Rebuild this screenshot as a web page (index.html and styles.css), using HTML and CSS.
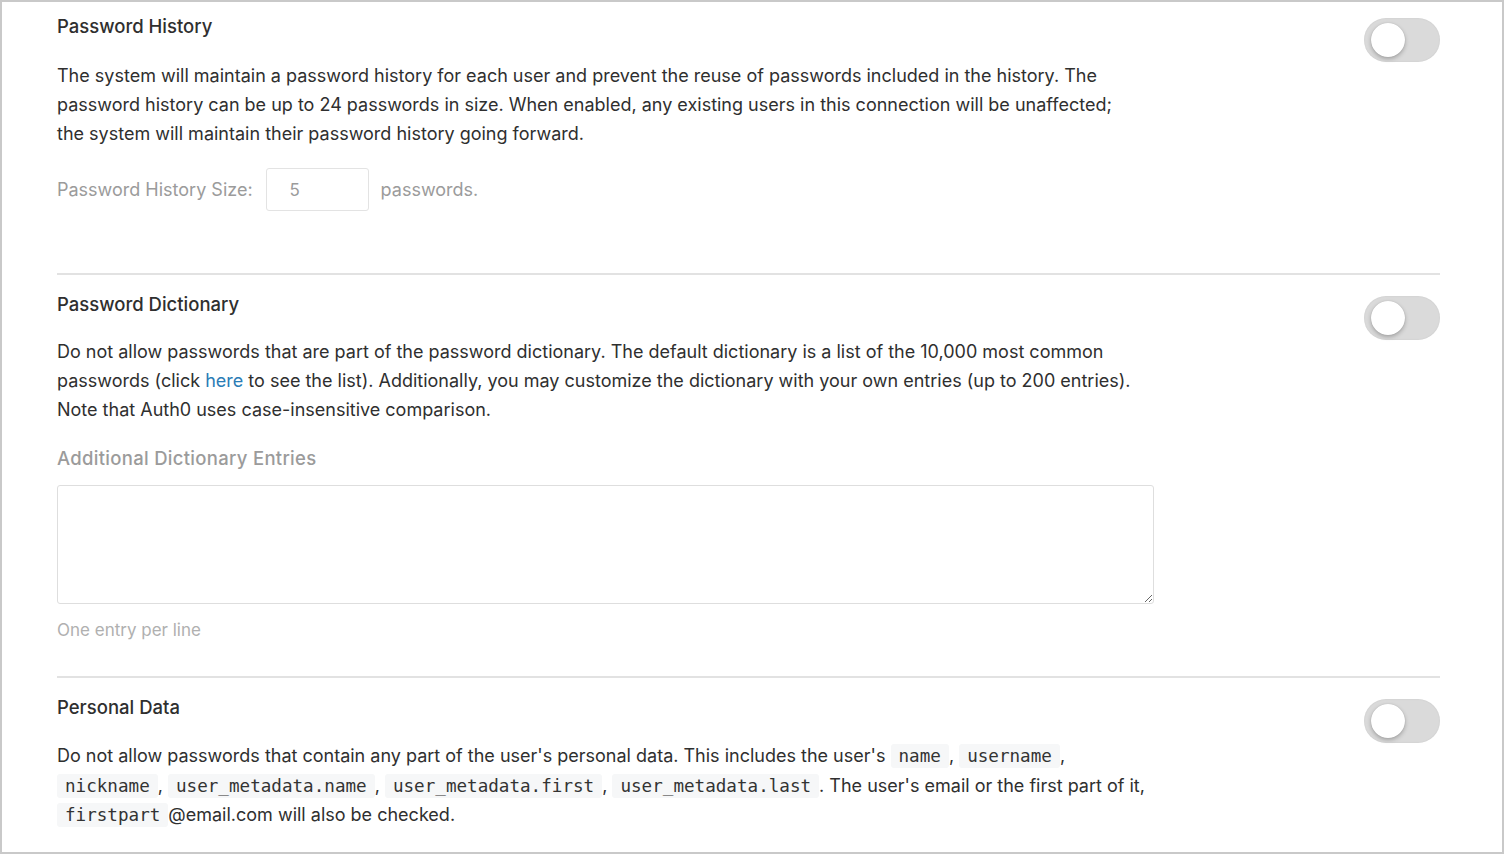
FILE: index.html
```html
<!DOCTYPE html>
<html>
<head>
<meta charset="utf-8">
<link rel="stylesheet" href="styles.css">
</head>
<body>
<div class="frame">
  <section class="setting first">
    <div class="setting-body">
      <h3 class="setting-title">Password History</h3>
      <p class="desc">The system will maintain a password history for each user and prevent the reuse of passwords included in the history. The password history can be up to 24 passwords in size. When enabled, any existing users in this connection will be unaffected; the system will maintain their password history going forward.</p>
      <div class="size-row">
        <span class="muted">Password History Size:</span>
        <input class="size-input" type="text" value="5" disabled>
        <span class="muted">passwords.</span>
      </div>
    </div>
    <div class="toggle"><span class="knob"></span></div>
  </section>

  <section class="setting second">
    <div class="setting-body">
      <h3 class="setting-title">Password Dictionary</h3>
      <p class="desc dict">Do not allow passwords that are part of the password dictionary. The default dictionary is a list of the 10,000 most common passwords (click <a href="#" class="link">here</a> to see the list). Additionally, you may customize the dictionary with your own entries (up to 200 entries). Note that Auth0 uses case-insensitive comparison.</p>
      <label class="field-label">Additional Dictionary Entries</label>
      <textarea class="entries"></textarea>
      <div class="help">One entry per line</div>
    </div>
    <div class="toggle"><span class="knob"></span></div>
  </section>

  <section class="setting third">
    <div class="setting-body">
      <h3 class="setting-title">Personal Data</h3>
      <p class="desc personal">Do not allow passwords that contain any part of the user's personal data. This includes the user's <code>name</code>, <code>username</code>, <code>nickname</code>, <code>user_metadata.name</code>, <code>user_metadata.first</code>, <code>user_metadata.last</code>. The user's email or the first part of it, <code>firstpart</code>@email.com will also be checked.</p>
    </div>
    <div class="toggle"><span class="knob"></span></div>
  </section>
</div>
</body>
</html>
```

FILE: styles.css
```css
html, body {
  margin: 0;
  padding: 0;
  background: #fff;
}
body {
  font-family: "Inter", "Noto Sans", sans-serif;
  color: #2f2f2f;
}
.frame {
  box-sizing: border-box;
  width: 1504px;
  height: 854px;
  border: 2px solid #c9c9c9;
  padding: 0 62px 0 55px;
  overflow: hidden;
}
.setting {
  display: flex;
  justify-content: space-between;
  align-items: flex-start;
  border-bottom: 2px solid #e2e2e2;
  box-sizing: border-box;
}
.first {
  padding-top: 14px;
  height: 273px;
}
.second {
  padding-top: 19px;
  height: 403px;
}
.third {
  border-bottom: none;
  padding-top: 19px;
}
.setting-body {
  width: 1097px;
}
.setting-title {
  margin: 0;
  font-size: 18.5px;
  font-weight: 500;
  line-height: 20px;
  color: #2f2f2f;
}
.desc {
  max-width: 1078px;
  margin: 25px 0 0;
  font-size: 18px;
  line-height: 29px;
}
.desc.dict {
  margin-top: 23px;
}
.size-row {
  display: flex;
  align-items: center;
  margin-top: 20px;
  font-size: 18px;
}
.muted {
  color: #9b9b9b;
}
.size-input {
  box-sizing: border-box;
  width: 103px;
  height: 43px;
  margin: 0 12px 0 13px;
  border: 1px solid #e3e3e3;
  border-radius: 3px;
  padding: 0 23px;
  font-family: inherit;
  font-size: 17px;
  color: #9b9b9b;
  background: #fff;
}
.toggle {
  flex: none;
  margin-top: 2px;
  width: 76px;
  height: 44px;
  border-radius: 22px;
  background: #dadada;
  box-shadow: inset 0 0 2px rgba(0,0,0,0.08);
  display: flex;
  align-items: center;
  padding-left: 7px;
  box-sizing: border-box;
}
.knob {
  width: 34px;
  height: 34px;
  border-radius: 50%;
  background: #fff;
  box-shadow: 0 2px 4px rgba(0,0,0,0.25), 0 0 1px rgba(0,0,0,0.2);
}
.link {
  color: #2a7cb6;
  text-decoration: none;
}
.field-label {
  display: block;
  margin-top: 24px;
  font-size: 18.5px;
  font-weight: 500;
  letter-spacing: 0.3px;
  color: #9b9b9b;
  line-height: 20px;
}
.entries {
  display: block;
  box-sizing: border-box;
  width: 1097px;
  height: 119px;
  margin-top: 17px;
  border: 1px solid #dedede;
  border-radius: 3px;
  resize: vertical;
}
.help {
  margin-top: 16px;
  font-size: 17px;
  color: #b0b0b0;
  line-height: 20px;
}
.desc.personal {
  max-width: 1097px;
  margin-top: 24px;
  font-size: 18px;
  line-height: 29.5px;
}
code {
  font-family: "DejaVu Sans Mono", monospace;
  font-size: 17.6px;
  line-height: 1;
  background: #f6f7f8;
  border-radius: 3px;
  padding: 2px 8px;
  color: #333;
}
```
